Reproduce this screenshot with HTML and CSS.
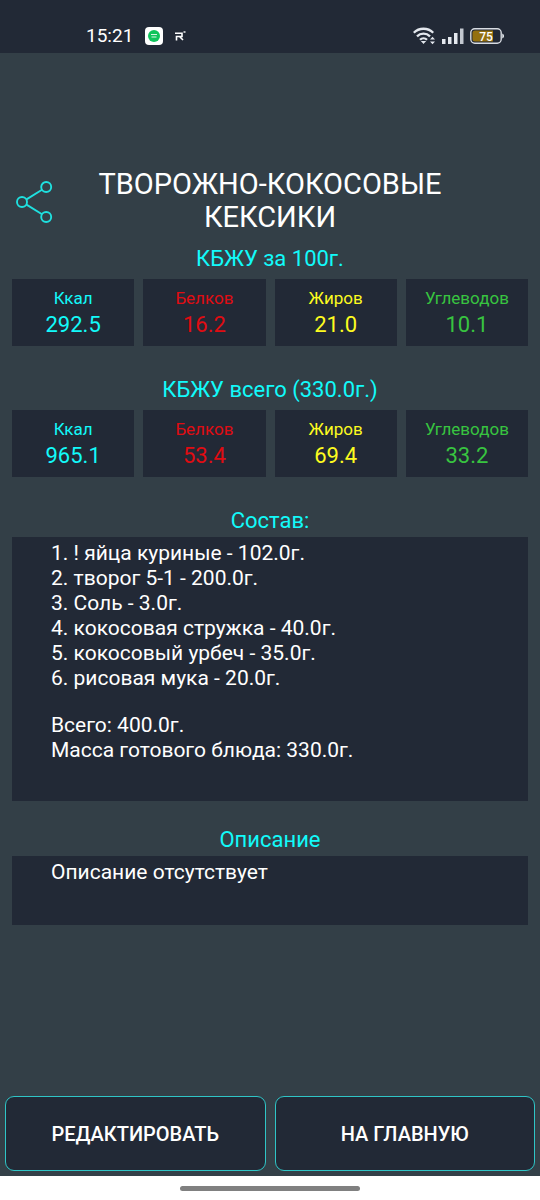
FILE: index.html
```html
<!DOCTYPE html>
<html lang="ru">
<head>
    <meta charset="UTF-8">
    <meta name="viewport" content="width=device-width, initial-scale=1.0">
    <title>Творожно-кокосовые кексики</title>
    <link rel="stylesheet" href="styles.css">
</head>
<body>
    <div class="status-bar">
        <div class="status-left">
            <span class="time">15:21</span>
            <svg class="icon-app" width="18" height="18" viewBox="0 0 18 18">
                <rect width="18" height="18" rx="4" fill="#fff"/>
                <circle cx="9" cy="9" r="6" fill="#0fc45c"/>
                <path d="M6 7.5h6M6.5 10h5" stroke="#d5f7e2" stroke-width="1"/>
            </svg>
            <svg width="11" height="10" viewBox="0 0 11 10" fill="none" stroke="#fff" stroke-width="1.6">
                <path d="M0 2.2h7v3.3H1.5V9.5M4.5 5.5l3.5 3.5"/>
                <path d="M8.5 1h2" stroke-width="1.4"/>
            </svg>
        </div>
        <div class="status-right">
            <svg width="23" height="18" viewBox="0 0 23 18" fill="none" stroke="#e4e8ee" stroke-width="2.3">
                <path d="M0.8 5.8a13.6 13.6 0 0 1 19.4 0M4 9.4a9.2 9.2 0 0 1 13 0M7 12.8a5 5 0 0 1 7 0"/>
                <path d="M7.8 14h5.4l-2.7 3z" fill="#e4e8ee" stroke="none"/>
                <path d="M17 12.6l2.5-2.8 2.5 2.8zM17 14.4l2.5 2.8 2.5-2.8z" fill="#e4e8ee" stroke="none"/>
            </svg>
            <svg width="22" height="16" viewBox="0 0 22 16">
                <path d="M0 11h3.5v5H0zM6 9h3.5v7H6zM12 5h3.5v11H12z" fill="#e4e8ee"/>
                <path d="M18 0.5h3.5V16H18z" fill="#c3c8d0"/>
            </svg>
            <svg class="battery" width="34" height="16" viewBox="0 0 34 16">
                <rect x="0.8" y="0.8" width="30.4" height="14.4" rx="4" fill="none" stroke="#d8dce2" stroke-width="1.4"/>
                <path d="M5 2.5h18v11H5a2.5 2.5 0 0 1-2.5-2.5V5A2.5 2.5 0 0 1 5 2.5z" fill="#94700f"/>
                <path d="M32.2 5.5a2.6 2.6 0 0 1 0 5z" fill="#d8dce2"/>
                <text x="16" y="12.5" text-anchor="middle">75</text>
            </svg>
        </div>
    </div>

    <main class="app">
        <header class="header">
            <button class="share" type="button" aria-label="Поделиться">
                <svg width="38" height="44" viewBox="0 0 38 44" fill="none" stroke="#1fe0df" stroke-width="1.9">
                    <path d="M10.5 19.4L26 9.8M10.5 24.6L26 34.2"/>
                    <circle cx="6" cy="22" r="5"/>
                    <circle cx="30.2" cy="7" r="5"/>
                    <circle cx="30.2" cy="37" r="5"/>
                </svg>
            </button>
            <h1>ТВОРОЖНО-КОКОСОВЫЕ КЕКСИКИ</h1>
        </header>

        <section class="nutrition">
            <h2>КБЖУ за 100г.</h2>
            <div class="cards">
                <div class="card kcal"><span>Ккал</span><b>292.5</b></div>
                <div class="card protein"><span>Белков</span><b>16.2</b></div>
                <div class="card fat"><span>Жиров</span><b>21.0</b></div>
                <div class="card carbs"><span>Углеводов</span><b>10.1</b></div>
            </div>
        </section>

        <section class="nutrition">
            <h2>КБЖУ всего (330.0г.)</h2>
            <div class="cards">
                <div class="card kcal"><span>Ккал</span><b>965.1</b></div>
                <div class="card protein"><span>Белков</span><b>53.4</b></div>
                <div class="card fat"><span>Жиров</span><b>69.4</b></div>
                <div class="card carbs"><span>Углеводов</span><b>33.2</b></div>
            </div>
        </section>

        <section class="details">
            <h2>Состав:</h2>
            <div class="panel ingredients">
                <ul>
                    <li>1. ! яйца куриные - 102.0г.</li>
                    <li>2. творог 5-1 - 200.0г.</li>
                    <li>3. Соль - 3.0г.</li>
                    <li>4. кокосовая стружка - 40.0г.</li>
                    <li>5. кокосовый урбеч - 35.0г.</li>
                    <li>6. рисовая мука - 20.0г.</li>
                </ul>
                <p>Всего: 400.0г.<br>Масса готового блюда: 330.0г.</p>
            </div>
        </section>

        <section class="details">
            <h2>Описание</h2>
            <div class="panel description">
                <p>Описание отсутствует</p>
            </div>
        </section>

        <div class="actions">
            <button type="button">РЕДАКТИРОВАТЬ</button>
            <button type="button">НА ГЛАВНУЮ</button>
        </div>
    </main>

    <div class="nav-bar"><div class="nav-handle"></div></div>
</body>
</html>
```
FILE: styles.css
```css
* {
    box-sizing: border-box;
}
body {
    font-family: Roboto, Arial, sans-serif;
    display: flex;
    flex-direction: column;
    min-height: 100vh;
    margin: 0;
    background-color: #333f47;
    color: #ffffff;
}
h1, h2, p, ul {
    margin: 0;
    padding: 0;
    font-weight: 400;
}
svg {
    display: block;
}
.status-bar {
    display: flex;
    justify-content: space-between;
    align-items: center;
    height: 53px;
    padding: 19px 36px 0 86px;
    background-color: #222936;
}
.status-left, .status-right {
    display: flex;
    align-items: center;
}
.status-left {
    gap: 12px;
}
.status-right {
    gap: 6px;
}
.time {
    font-size: 19px;
    line-height: 22px;
}
.battery text {
    font-size: 12px;
    font-weight: 500;
    fill: #ffffff;
}
.app {
    flex: 1;
    display: flex;
    flex-direction: column;
    padding: 115px 12px 5px;
}
.header {
    display: grid;
    grid-template-columns: 42px 1fr 42px;
    align-items: center;
}
.share {
    padding: 2px 0 0 4px;
    border: none;
    background: none;
    cursor: pointer;
}
h1 {
    padding: 0 20px;
    font-size: 29px;
    line-height: 33px;
    text-align: center;
}
h2 {
    color: #12fafa;
    font-size: 22px;
    line-height: 26px;
    text-align: center;
}
.nutrition {
    margin-bottom: 31px;
}
.header + .nutrition {
    margin-top: 12px;
}
.cards {
    display: grid;
    grid-template-columns: repeat(4, 1fr);
    gap: 9px;
    margin-top: 7px;
}
.card {
    display: flex;
    flex-direction: column;
    align-items: center;
    height: 67px;
    padding-top: 7px;
    background-color: #222936;
}
.card span {
    font-size: 17px;
    line-height: 24px;
}
.card b {
    font-size: 22px;
    font-weight: 400;
    line-height: 30px;
}
.kcal {
    color: #12fafa;
}
.protein {
    color: #e00c12;
}
.fat {
    color: #fdfb1f;
}
.carbs {
    color: #38c440;
}
.details {
    margin-bottom: 26px;
}
.panel {
    margin-top: 3px;
    padding: 4px 39px 0;
    background-color: #222936;
    font-size: 21px;
    line-height: 25px;
}
.ingredients {
    padding-bottom: 38px;
}
.panel ul {
    margin-bottom: 22px;
    list-style: none;
}
.description {
    padding-bottom: 40px;
}
.actions {
    display: grid;
    grid-template-columns: 1fr 1fr;
    gap: 9px;
    margin: auto -7px 0;
}
.actions button {
    height: 75px;
    border: 1px solid #2fc5c6;
    border-radius: 9px;
    background-color: #222936;
    color: #ffffff;
    font-family: inherit;
    font-size: 20px;
    font-weight: 500;
    cursor: pointer;
}
.nav-bar {
    display: flex;
    justify-content: center;
    align-items: center;
    height: 24px;
    background-color: #ffffff;
}
.nav-handle {
    width: 180px;
    height: 5px;
    border-radius: 3px;
    background-color: #808080;
}
```
